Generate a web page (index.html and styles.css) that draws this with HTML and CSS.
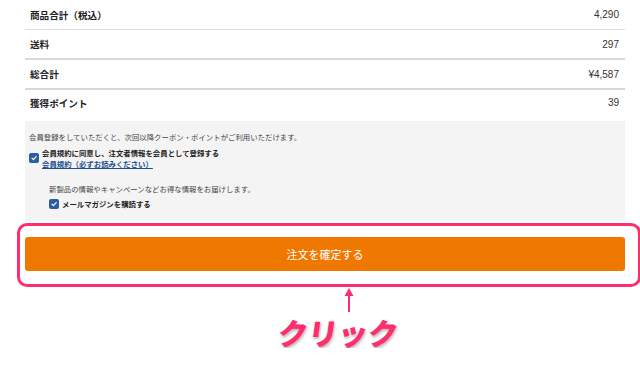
FILE: index.html
```html
<!DOCTYPE html>
<html lang="ja">
<head>
  <meta charset="utf-8">
  <title>注文確認</title>
  <link rel="stylesheet" href="styles.css">
</head>
<body>

  <div class="summary">
    <div class="row">
      <span class="label">商品合計（税込）</span>
      <span class="value">4,290</span>
    </div>
    <div class="row thick">
      <span class="label">送料</span>
      <span class="value">297</span>
    </div>
    <div class="row thick">
      <span class="label">総合計</span>
      <span class="value">¥4,587</span>
    </div>
    <div class="row last">
      <span class="label">獲得ポイント</span>
      <span class="value">39</span>
    </div>
  </div>

  <div class="member-box">
    <p class="note">会員登録をしていただくと、次回以降クーポン・ポイントがご利用いただけます。</p>
    <label class="check-row">
      <span class="checkbox">
        <svg width="10" height="10" viewBox="0 0 10 10"><rect width="10" height="10" rx="2" fill="#2c5d9f"/><path d="M3 5.2 L4.4 6.6 L7.2 3.6" stroke="#fff" stroke-width="1.2" fill="none" stroke-linecap="round" stroke-linejoin="round"/></svg>
      </span>
      <span class="check-text">
        <strong>会員規約に同意し、注文者情報を会員として登録する</strong>
        <a href="#">会員規約（必ずお読みください）</a>
      </span>
    </label>

    <div class="mail">
      <p class="note">新製品の情報やキャンペーンなどお得な情報をお届けします。</p>
      <label class="check-row">
        <span class="checkbox">
          <svg width="10" height="10" viewBox="0 0 10 10"><rect width="10" height="10" rx="2" fill="#2c5d9f"/><path d="M3 5.2 L4.4 6.6 L7.2 3.6" stroke="#fff" stroke-width="1.2" fill="none" stroke-linecap="round" stroke-linejoin="round"/></svg>
        </span>
        <strong>メールマガジンを購読する</strong>
      </label>
    </div>
  </div>

  <div class="highlight">
    <button class="order-btn">注文を確定する</button>
  </div>

  <div class="annotation">
    <svg class="arrow" width="10" height="24" viewBox="0 0 10 24">
      <path d="M5 0 L9.5 8 L0.5 8 Z" fill="#ff2d6e"/>
      <rect x="4" y="7" width="2" height="17" fill="#ff2d6e"/>
    </svg>
    <div class="click-label">クリック</div>
  </div>

</body>
</html>
```

FILE: styles.css
```css
body {
  margin: 0;
  padding: 0;
  background-color: #fff;
  font-family: "Noto Sans CJK JP", "Liberation Sans", sans-serif;
  color: #333;
}

.summary {
  width: 600px;
  margin-left: 25px;
}

.row {
  display: flex;
  justify-content: space-between;
  align-items: center;
  height: 29px;
  padding: 0 6px 0 5px;
  border-bottom: 1px solid #dcdcdc;
}

.row.thick {
  height: 28px;
  border-bottom: 2px solid #d8d8d8;
}

.row.last {
  height: 25px;
  border-bottom: none;
}

.label {
  font-size: 9.6px;
  font-weight: bold;
  color: #222;
}

.value {
  font-family: "Liberation Sans", sans-serif;
  font-size: 10px;
  color: #333;
}

.member-box {
  width: 592px;
  margin: 6px 0 0 25px;
  padding: 10px 4px 11px 4px;
  background-color: #f4f4f4;
  font-size: 7.4px;
  color: #333;
}

.note {
  margin: 0;
  line-height: 12px;
  color: #444;
}

.check-row {
  display: flex;
  align-items: center;
  gap: 3px;
  margin-top: 4px;
}

.checkbox {
  display: flex;
  width: 10px;
  height: 10px;
}

.check-text {
  display: flex;
  flex-direction: column;
  line-height: 11px;
}

.check-text a {
  color: #1d4f8f;
  font-weight: bold;
  text-decoration: underline;
}

.check-row strong {
  color: #222;
}

.mail {
  margin-top: 14px;
  padding-left: 20px;
}

.mail .check-row {
  margin-top: 3px;
  line-height: 12px;
}

.highlight {
  width: 606px;
  margin: 2px 0 0 17px;
  padding: 11px 7px 13px 5px;
  border: 3px solid #ff2d6e;
  border-radius: 10px;
}

.order-btn {
  display: block;
  width: 600px;
  height: 34px;
  border: none;
  border-radius: 3px;
  background-color: #ee7800;
  color: #fff;
  font-family: "Noto Sans CJK JP", sans-serif;
  font-size: 11px;
  cursor: pointer;
}

.annotation {
  display: flex;
  flex-direction: column;
}

.arrow {
  margin: 1px 0 0 344px;
}

.click-label {
  margin: 4px 0 0 276px;
  font-size: 30px;
  line-height: 32px;
  font-weight: 900;
  color: #ff2d6e;
  -webkit-text-stroke: 5px #fff;
  paint-order: stroke fill;
  text-shadow: 1px 2px 3px rgba(0, 0, 0, 0.3);
  transform: skewX(-8deg);
  transform-origin: left bottom;
}
```
